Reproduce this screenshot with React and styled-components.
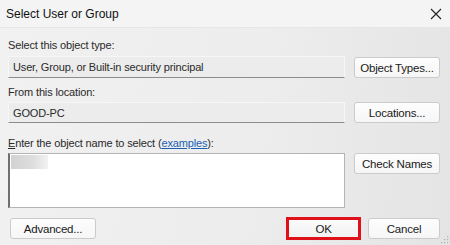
import React from "react";
import styled, { createGlobalStyle } from "styled-components";

const Global = createGlobalStyle`
  html, body { margin: 0; padding: 0; }
  body { width: 450px; height: 245px; overflow: hidden; background: #ececec; }
  * { box-sizing: border-box; }
`;

const Window = styled.div`
  position: relative;
  width: 450px;
  height: 245px;
  display: flex;
  flex-direction: column;
  font-family: "Liberation Sans", Arial, sans-serif;
  color: #1a1a1a;
  background: linear-gradient(100deg, #f1f1f1 0%, #ededed 55%, #e4e4e4 100%);
`;

const TitleBar = styled.div`
  height: 28px;
  flex: none;
  display: flex;
  align-items: center;
  justify-content: space-between;
  padding: 0 6px 0 6px;
  background: #f4f4f4;
  border-bottom: 1px solid #e6e6e6;
`;

const Title = styled.span`
  font-size: 12px;
  color: #111;
`;

const Close = styled.svg`
  width: 12px;
  height: 12px;
  margin-right: 2px;
`;

const Body = styled.div`
  flex: 1;
  display: flex;
  flex-direction: column;
  padding: 10px 10px 0 8px;
`;

const Label = styled.div`
  font-size: 11px;
  line-height: 14px;
  height: 14px;
  color: #2a2a2a;
  margin-top: ${(p) => p.$mt || 0}px;
  letter-spacing: -0.15px;
`;

const Row = styled.div`
  display: grid;
  grid-template-columns: 337px 86px;
  column-gap: 9px;
  align-items: start;
  margin-top: ${(p) => p.$mt || 0}px;
`;

const Field = styled.div`
  height: ${(p) => p.$h || 22}px;
  display: flex;
  align-items: center;
  padding-left: 4px;
  font-size: 11px;
  letter-spacing: -0.15px;
  color: #2a2a2a;
  background: #ececec;
  border: 1px solid #f6f6f6;
  border-bottom: 1px solid #8c8c8c;
`;

const TextArea = styled.div`
  height: 55px;
  background: #fff;
  border: 1px solid #b4b4b4;
  border-left: 2px solid #6f6f6f;
  padding: 1px 0 0 1px;
`;

const Blur = styled.div`
  width: 37px;
  height: 14px;
  background: linear-gradient(90deg, #d2d2d2 0%, #dedede 60%, #f2f2f2 100%);
`;

const Button = styled.button`
  height: 21px;
  width: ${(p) => p.$w || 86}px;
  margin-top: ${(p) => p.$mt || 0}px;
  padding: 0;
  font-family: inherit;
  font-size: 11.5px;
  letter-spacing: -0.2px;
  color: #1a1a1a;
  background: linear-gradient(#fdfdfd, #f6f6f6);
  border: 1px solid #cbcbcb;
  border-radius: 3px;
  cursor: default;
`;

const Footer = styled.div`
  display: flex;
  align-items: center;
  justify-content: space-between;
  margin-top: 9px;
  padding-left: 2px;
`;

const Group = styled.div`
  display: flex;
  align-items: center;
  gap: 7px;
`;

const Highlight = styled.div`
  border: 3px solid #e0101b;
  display: flex;
`;

const OkButton = styled(Button)`
  border: none;
  border-radius: 0;
  height: 17px;
  background: linear-gradient(#fbfbfb, #f1f1f1);
`;

const Link = styled.span`
  color: #1a5fb4;
  text-decoration: underline;
`;

const U = styled.span`
  text-decoration: underline;
`;

const Grip = styled.svg`
  position: absolute;
  right: 1px;
  bottom: 1px;
  width: 8px;
  height: 8px;
`;

export default function App() {
  return (
    <>
      <Global />
      <Window>
        <TitleBar>
          <Title>Select User or Group</Title>
          <Close viewBox="0 0 12 12">
            <path d="M1 1 L11 11 M11 1 L1 11" stroke="#222" strokeWidth="1.1" fill="none" />
          </Close>
        </TitleBar>
        <Body>
          <Label>Select this object type:</Label>
          <Row $mt={4}>
            <Field>User, Group, or Built-in security principal</Field>
            <Button $mt={1}>Object Types...</Button>
          </Row>
          <Label $mt={7}>From this location:</Label>
          <Row $mt={3}>
            <Field $h={21}>GOOD-PC</Field>
            <Button>Locations...</Button>
          </Row>
          <Label $mt={13}>
            <U>E</U>nter the object name to select (<Link>examples</Link>):
          </Label>
          <Row $mt={3}>
            <TextArea>
              <Blur />
            </TextArea>
            <Button>Check Names</Button>
          </Row>
          <Footer>
            <Button>Advanced...</Button>
            <Group>
              <Highlight>
                <OkButton $w={69}>OK</OkButton>
              </Highlight>
              <Button $w={72}>Cancel</Button>
            </Group>
          </Footer>
        </Body>
        <Grip viewBox="0 0 8 8">
          <rect x="6" y="0" width="1.2" height="1.2" fill="#b0b0b0" />
          <rect x="3" y="3" width="1.2" height="1.2" fill="#b0b0b0" />
          <rect x="6" y="3" width="1.2" height="1.2" fill="#b0b0b0" />
          <rect x="0" y="6" width="1.2" height="1.2" fill="#b0b0b0" />
          <rect x="3" y="6" width="1.2" height="1.2" fill="#b0b0b0" />
          <rect x="6" y="6" width="1.2" height="1.2" fill="#b0b0b0" />
        </Grip>
      </Window>
    </>
  );
}
